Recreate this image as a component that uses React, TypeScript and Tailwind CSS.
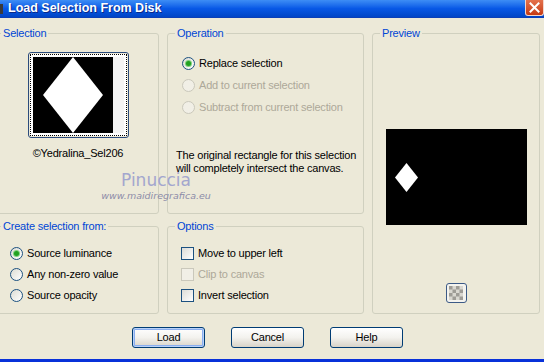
import clsx from 'clsx'

const Radio = ({ checked, disabled }: { checked?: boolean; disabled?: boolean }) => (
    <span
        className={clsx(
            'w-[13px] h-[13px] rounded-full border flex items-center justify-center shrink-0',
            disabled ? 'border-[#CAC8BB] bg-[#F1EFE6]' : 'border-[#1C5180] bg-linear-to-br from-[#DCDCD3] to-[#FFFFFF]'
        )}
    >
        {checked && <span className="w-[5px] h-[5px] rounded-full bg-[#21A121] shadow-[0_0_0_1px_#7FD07F]" />}
    </span>
)

const Check = ({ disabled }: { disabled?: boolean }) => (
    <span
        className={clsx(
            'w-[13px] h-[13px] border shrink-0',
            disabled ? 'border-[#CAC8BB] bg-[#F1EFE6]' : 'border-[#1C5180] bg-linear-to-br from-[#DCDCD7] to-[#FFFFFF]'
        )}
    />
)

const Group = ({ label, className, children }: { label: string; className?: string; children?: React.ReactNode }) => (
    <fieldset className={clsx('border border-[#D0D0BF] rounded-[3px] min-w-0', className)}>
        <legend className="ml-[7px] px-[2px] text-[#0046D5] leading-[13px]">{label}</legend>
        {children}
    </fieldset>
)

const Btn = ({ label, def }: { label: string; def?: boolean }) => (
    <button
        className={clsx(
            'w-[73px] h-[21px] rounded-[3px] border border-[#003C74] bg-linear-to-b from-[#FFFFFF] via-[#F3F2EE] to-[#D8D3C8] text-black leading-[19px]',
            def && 'shadow-[inset_0_0_0_1px_#B8D1F8,inset_0_0_0_2px_#8AAEF0]'
        )}
    >
        {label}
    </button>
)

const App = () => {
    return (
        <div className="w-[544px] h-[362px] bg-[#ECE9D8] overflow-hidden flex flex-col font-['Liberation_Sans',Arial,sans-serif] text-[11px] tracking-[-0.2px] text-black relative">
            {/* title bar */}
            <div className="h-[18px] shrink-0 flex items-center bg-linear-to-b from-[#3D8DF5] via-[#0858E6] to-[#0045C6] border-b border-[#0A3FB8]">
                <div className="w-[3px] h-[10px] bg-[#3a3a3a] mt-[1px]" />
                <span className="ml-[5px] text-white font-bold text-[12.5px] tracking-normal [text-shadow:1px_1px_0_#0A2A8A]">Load Selection From Disk</span>
                <div className="ml-auto w-[19px] h-[17px] -mt-[2px] rounded-b-[3px] border border-t-0 border-[#F3D6CC] bg-linear-to-b from-[#E6744F] to-[#C63A10] flex items-center justify-center">
                    <svg width="11" height="11" viewBox="0 0 11 11">
                        <path d="M1.5 1.5 L9.5 9.5 M9.5 1.5 L1.5 9.5" stroke="white" strokeWidth="2" strokeLinecap="square" />
                    </svg>
                </div>
            </div>

            {/* groups */}
            <div className="flex gap-[8px] ml-[-7px] mt-[9px] h-[287px] shrink-0">
                <div className="flex flex-col gap-[6px] w-[166px]">
                    <Group label="Selection" className="h-[187px]">
                        <div className="flex flex-col items-center pt-[12px] pl-[4px]">
                            <div className="w-[101px] h-[86px] rounded-[3px] border border-[#2B4B7C] p-[1px]">
                                <div className="w-full h-full border border-dotted border-black p-[2px] flex bg-white">
                                    <div className="w-[80px] h-full bg-black flex items-center justify-center">
                                        <svg width="60" height="76" viewBox="0 0 60 76">
                                            <polygon points="30,0 60,38 30,76 0,38" fill="white" />
                                        </svg>
                                    </div>
                                    <div className="flex-1 bg-[#F4F4F4]" />
                                </div>
                            </div>
                            <div className="mt-[9px] leading-[13px]">©Yedralina_Sel206</div>
                        </div>
                    </Group>
                    <Group label="Create selection from:" className="h-[94px]">
                        <div className="flex flex-col pt-[10px] pl-[16px]">
                            <div className="h-[21px] flex items-center gap-[4px]"><Radio checked />Source luminance</div>
                            <div className="h-[21px] flex items-center gap-[4px]"><Radio />Any non-zero value</div>
                            <div className="h-[21px] flex items-center gap-[4px]"><Radio />Source opacity</div>
                        </div>
                    </Group>
                </div>

                <div className="flex flex-col gap-[6px] w-[197px]">
                    <Group label="Operation" className="h-[187px]">
                        <div className="flex flex-col pt-[12px] pl-[8px]">
                            <div className="h-[22px] flex items-center gap-[4px] ml-[6px]"><Radio checked />Replace selection</div>
                            <div className="h-[22px] flex items-center gap-[4px] ml-[6px] text-[#ACA899]"><Radio disabled />Add to current selection</div>
                            <div className="h-[22px] flex items-center gap-[4px] ml-[6px] text-[#ACA899]"><Radio disabled />Subtract from current selection</div>
                            <p className="mt-[31px] leading-[13px]">
                                The original rectangle for this selection<br />will completely intersect the canvas.
                            </p>
                        </div>
                    </Group>
                    <Group label="Options" className="h-[94px]">
                        <div className="flex flex-col pt-[10px] pl-[13px]">
                            <div className="h-[21px] flex items-center gap-[4px]"><Check />Move to upper left</div>
                            <div className="h-[21px] flex items-center gap-[4px] text-[#ACA899]"><Check disabled />Clip to canvas</div>
                            <div className="h-[21px] flex items-center gap-[4px]"><Check />Invert selection</div>
                        </div>
                    </Group>
                </div>

                <Group label="Preview" className="w-[168px] h-[287px]">
                    <div className="flex flex-col items-center">
                        <div className="mt-[89px] w-[141px] h-[96px] bg-black pl-[9px] pt-[34px]">
                            <svg width="23" height="29" viewBox="0 0 23 29">
                                <polygon points="11.5,0 23,14.5 11.5,29 0,14.5" fill="white" />
                            </svg>
                        </div>
                        <div className="mt-[58px] w-[21px] h-[20px] rounded-[3px] border border-[#3C5A86] bg-[#F4F3EE] flex items-center justify-center">
                            <svg width="14" height="14" viewBox="0 0 14 14">
                                <defs>
                                    <pattern id="chk" width="7" height="7" patternUnits="userSpaceOnUse">
                                        <rect width="7" height="7" fill="#D9D7D0" />
                                        <rect width="3.5" height="3.5" fill="#9E9C96" />
                                        <rect x="3.5" y="3.5" width="3.5" height="3.5" fill="#9E9C96" />
                                    </pattern>
                                </defs>
                                <rect width="14" height="14" fill="url(#chk)" />
                            </svg>
                        </div>
                    </div>
                </Group>
            </div>

            {/* buttons */}
            <div className="flex mt-[13px] pl-[132px] gap-[26px]">
                <Btn label="Load" def />
                <Btn label="Cancel" />
                <Btn label="Help" />
            </div>

            <div className="flex-1" />
            <div className="h-[3px] shrink-0 bg-[#0831D9]" />

            {/* watermark */}
            <div className="absolute left-[100px] top-[170px] w-[112px] flex flex-col items-center font-['DejaVu_Sans',sans-serif] tracking-normal pointer-events-none">
                <span className="text-[17px] leading-[20px] text-[#A3A6CE]">Pinuccia</span>
                <span className="text-[9.5px] leading-[12px] text-[#8C8CA8] italic">www.maidiregrafica.eu</span>
            </div>
        </div>
    )
}

export default App
